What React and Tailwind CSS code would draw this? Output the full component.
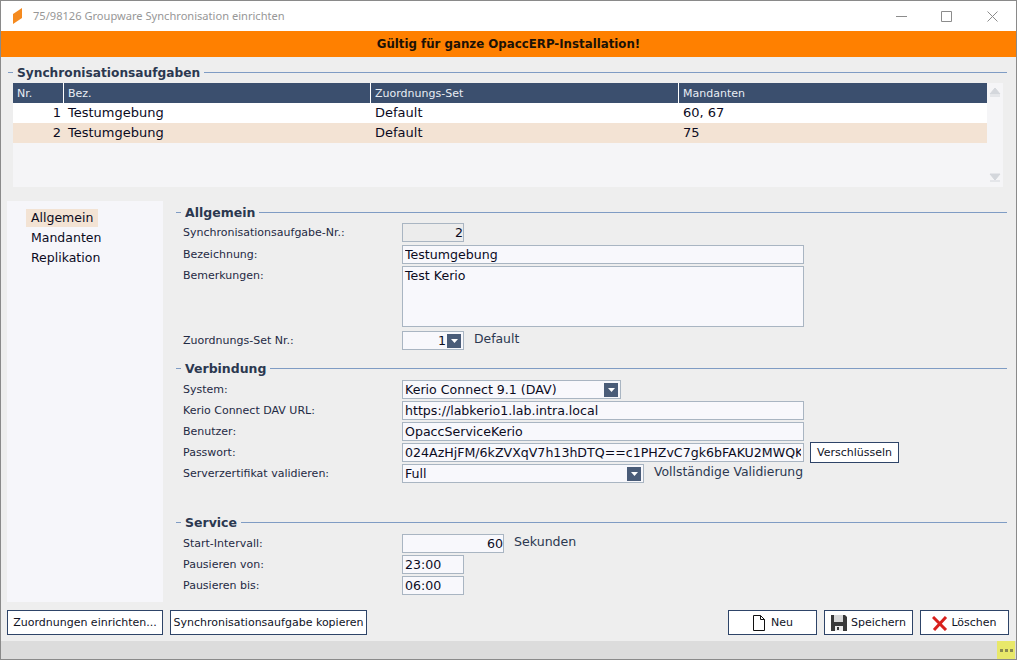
const inputCls =
  "block h-full bg-[#f8f8fc] border border-[#a9b5c2] px-[2px] text-[12.6px] text-[#0b0b1e] outline-none";

function SectionHead({ title, size = "text-[12.5px]", className = "" }) {
  return (
    <div className={"flex items-center h-[16px] " + className}>
      <div className="w-[5px] h-px bg-[#7f9cc4]" />
      <span className={"px-[4px] pt-[2px] font-bold text-[#2b3850] leading-none " + size}>{title}</span>
      <div className="flex-1 h-px bg-[#7f9cc4]" />
    </div>
  );
}

function DropButton() {
  return (
    <div className="w-[14px] h-[14px] bg-[#4a5c78] flex items-center justify-center shrink-0">
      <svg width="7" height="4" viewBox="0 0 7 4">
        <path d="M0 0h7L3.500 4z" fill="#fff" />
      </svg>
    </div>
  );
}

function Row({ label, height = "h-[21px]", children }) {
  return (
    <div className={"flex items-start " + height}>
      <div className="w-[226px] shrink-0 pl-[7px] text-[11px] leading-[20px] text-[#1f2a44]">{label}</div>
      {children}
    </div>
  );
}

function Select({ value, width, right }) {
  return (
    <div className={inputCls + " flex items-center justify-between pr-[2px]! " + width}>
      <span className={"pt-[1px] " + (right ? "flex-1 text-right pr-[1px]" : "flex-1")}>{value}</span>
      <DropButton />
    </div>
  );
}

function Field({ value, width, right, bg = "" }) {
  return (
    <input
      readOnly
      value={value}
      className={inputCls + " " + width + " " + bg + (right ? " text-right pr-0!" : "")}
    />
  );
}

function ActionButton({ children, className = "" }) {
  return (
    <button
      className={
        "h-[25px] pt-[1px] bg-white border border-[#2e4468] text-[11px] text-[#10131f] whitespace-nowrap flex items-center justify-center " +
        className
      }
    >
      {children}
    </button>
  );
}

export default function App() {
  const columns = "grid grid-cols-[51px_307px_308px_1fr]";

  return (
    <div
      className="w-[1017px] h-[660px] flex flex-col bg-[#eeeeee] border border-[#8a8a8a] overflow-hidden"
      style={{ fontFamily: '"DejaVu Sans", sans-serif' }}
    >
      {/* title bar */}
      <div className="h-[30px] shrink-0 bg-white flex items-center pl-[11px]">
        <svg width="11" height="16" viewBox="0 0 11 16" className="shrink-0">
          <path d="M1 6 10 0v10L1 16z" fill="#f58a1f" />
        </svg>
        <span
          className="ml-[10px] text-[11.1px] text-[#979797]"
          style={{ fontFamily: '"Noto Sans", sans-serif' }}
        >
          75/98126 Groupware Synchronisation einrichten
        </span>
        <div className="ml-auto flex items-center">
          <svg width="11" height="11" viewBox="0 0 11 11" className="mr-[34px]">
            <path d="M0 5.500h11" stroke="#8c8c8c" fill="none" />
          </svg>
          <svg width="11" height="11" viewBox="0 0 11 11" className="mr-[35px]">
            <path d="M.5.500h10v10H.5z" stroke="#8c8c8c" fill="none" />
          </svg>
          <svg width="11" height="11" viewBox="0 0 11 11" className="mr-[18px]">
            <path d="M.5.500l10 10M10.500.500l-10 10" stroke="#8c8c8c" fill="none" />
          </svg>
        </div>
      </div>

      {/* notice */}
      <div className="h-[26px] pt-[1px] shrink-0 bg-[#ff8000] flex items-center justify-center text-[11.8px] font-bold text-[#1c1206]">
        Gültig für ganze OpaccERP-Installation!
      </div>

      {/* task table */}
      <SectionHead
        title="Synchronisationsaufgaben"
        size="text-[12.2px]"
        className="mt-[7px] ml-[7px] mr-[9px]"
      />
      <div className="mt-[3px] ml-[12px] mr-[13px] h-[104px] shrink-0 bg-[#f5f5f7] flex">
        <div className="w-[974px] text-[13px] text-[#0b0b1e]">
          <div className={columns + " h-[20px] bg-[#3b4f6e] text-[11px] text-[#e8edf4] leading-[21px]"}>
            <div className="pl-[4px] border-r border-white">Nr.</div>
            <div className="pl-[4px] border-r border-white">Bez.</div>
            <div className="pl-[4px] border-r border-white">Zuordnungs-Set</div>
            <div className="pl-[4px]">Mandanten</div>
          </div>
          <div className={columns + " h-[20px] bg-white leading-[20px]"}>
            <div className="text-right pr-[3px]">1</div>
            <div className="pl-[4px]">Testumgebung</div>
            <div className="pl-[4px]">Default</div>
            <div className="pl-[4px]">60, 67</div>
          </div>
          <div className={columns + " h-[20px] bg-[#f3e3d4] leading-[20px]"}>
            <div className="text-right pr-[3px]">2</div>
            <div className="pl-[4px]">Testumgebung</div>
            <div className="pl-[4px]">Default</div>
            <div className="pl-[4px]">75</div>
          </div>
        </div>
        <div className="flex-1 flex flex-col items-center justify-between pt-[5px] pb-[5px]">
          <svg width="12" height="9" viewBox="0 0 12 9">
            <path d="M6 0l5 6H1zM1 8h10" fill="#d4d7dc" stroke="#d4d7dc" />
          </svg>
          <svg width="12" height="9" viewBox="0 0 12 9">
            <path d="M6 7L1 1h10zM1 8h10" fill="#d4d7dc" stroke="#d4d7dc" />
          </svg>
        </div>
      </div>

      {/* main area */}
      <div className="mt-[14px] flex flex-1 min-h-0">
        <nav className="ml-[6px] w-[156px] h-[401px] shrink-0 bg-[#f6f6fa] pt-[7px] pl-[19px] text-[12.5px] text-[#0b0b1e]">
          <div className="h-[20px] flex items-center">
            <span className="bg-[#f3e3d4] pl-[5px] pr-[5px] leading-[18px]">Allgemein</span>
          </div>
          <div className="h-[20px] flex items-center pl-[5px]">Mandanten</div>
          <div className="h-[20px] flex items-center pl-[5px]">Replikation</div>
        </nav>

        <div className="ml-[13px] flex-1 pr-[9px]">
          <SectionHead title="Allgemein" className="mt-[3px] mb-[3px]" />
          <Row label="Synchronisationsaufgabe-Nr.:" height="h-[22px]">
            <div className="h-[19px]">
              <Field value="2" width="w-[62px]" right bg="bg-[#ececec]!" />
            </div>
          </Row>
          <Row label="Bezeichnung:">
            <div className="h-[19px]">
              <Field value="Testumgebung" width="w-[402px]" />
            </div>
          </Row>
          <Row label="Bemerkungen:" height="h-[65px]">
            <textarea
              readOnly
              value="Test Kerio"
              className={inputCls + " w-[402px] h-[61px]! pt-[1px] resize-none leading-[16px]"}
            />
          </Row>
          <Row label="Zuordnungs-Set Nr.:" height="h-[19px]">
            <div className="h-[19px]">
              <Select value="1" width="w-[62px]" right />
            </div>
            <span className="ml-[10px] text-[12.4px] leading-[15px] text-[#2b3850]">Default</span>
          </Row>

          <SectionHead title="Verbindung" className="mt-[10px] mb-[4px]" />
          <Row label="System:">
            <div className="h-[19px]">
              <Select value="Kerio Connect 9.1 (DAV)" width="w-[219px]" />
            </div>
          </Row>
          <Row label="Kerio Connect DAV URL:">
            <div className="h-[19px]">
              <Field value="https://labkerio1.lab.intra.local" width="w-[402px]" />
            </div>
          </Row>
          <Row label="Benutzer:">
            <div className="h-[19px]">
              <Field value="OpaccServiceKerio" width="w-[402px]" />
            </div>
          </Row>
          <Row label="Passwort:">
            <div className="h-[19px]">
              <Field value="024AzHjFM/6kZVXqV7h13hDTQ==c1PHZvC7gk6bFAKU2MWQKhqP3xT" width="w-[402px]" />
            </div>
            <ActionButton className="ml-[6px] w-[89px] h-[21px]! -mt-[1px]">Verschlüsseln</ActionButton>
          </Row>
          <Row label="Serverzertifikat validieren:" height="h-[19px]">
            <div className="h-[19px]">
              <Select value="Full" width="w-[242px]" />
            </div>
            <span className="ml-[10px] text-[12.4px] leading-[15px] text-[#2b3850] whitespace-nowrap">
              Vollständige Validierung
            </span>
          </Row>

          <SectionHead title="Service" className="mt-[31px] mb-[4px]" />
          <Row label="Start-Intervall:">
            <div className="h-[19px]">
              <Field value="60" width="w-[102px]" right />
            </div>
            <span className="ml-[10px] text-[12.6px] leading-[15px] text-[#2b3850]">Sekunden</span>
          </Row>
          <Row label="Pausieren von:">
            <div className="h-[19px]">
              <Field value="23:00" width="w-[62px]" />
            </div>
          </Row>
          <Row label="Pausieren bis:">
            <div className="h-[19px]">
              <Field value="06:00" width="w-[62px]" />
            </div>
          </Row>
        </div>
      </div>

      {/* action buttons */}
      <div className="h-[39px] shrink-0 flex pl-[6px] pr-[7px] pt-[8px]">
        <ActionButton className="w-[156px]">Zuordnungen einrichten...</ActionButton>
        <ActionButton className="ml-[7px] w-[197px]">Synchronisationsaufgabe kopieren</ActionButton>
        <ActionButton className="ml-auto w-[89px]">
          <svg width="14" height="16" viewBox="0 0 14 16" className="mr-[5px]">
            <path d="M1.500.500h7l4 4v11h-11zM8.500.500v4h4" fill="#fff" stroke="#111" />
          </svg>
          Neu
        </ActionButton>
        <ActionButton className="ml-[7px] w-[89px]">
          <svg width="16" height="16" viewBox="0 0 16 16" className="mr-[4px]">
            <path d="M0 0h14l2 2v14H0z" fill="#3a3a3a" />
            <path d="M3 0h9v7H3z" fill="#d8d8d8" />
            <path d="M4 11h8v5H4z" fill="#eee" />
            <path d="M6 12h2v3H6z" fill="#3a3a3a" />
          </svg>
          Speichern
        </ActionButton>
        <ActionButton className="ml-[7px] w-[89px]">
          <svg width="16" height="15" viewBox="0 0 16 15" className="mr-[3px]">
            <path d="M1 1l13 13M14 1 2 14" stroke="#d8201c" strokeWidth="3" fill="none" />
          </svg>
          Löschen
        </ActionButton>
      </div>

      {/* status bar */}
      <div className="h-[18px] shrink-0 bg-[#dcdcdc] flex justify-end">
        <div className="w-[18px] bg-[#e8e86a] flex items-center justify-center gap-[2px] mr-[1px]">
          <span className="w-[3px] h-[3px] bg-[#8a8a50]" />
          <span className="w-[3px] h-[3px] bg-[#8a8a50]" />
          <span className="w-[3px] h-[3px] bg-[#8a8a50]" />
        </div>
      </div>
    </div>
  );
}
